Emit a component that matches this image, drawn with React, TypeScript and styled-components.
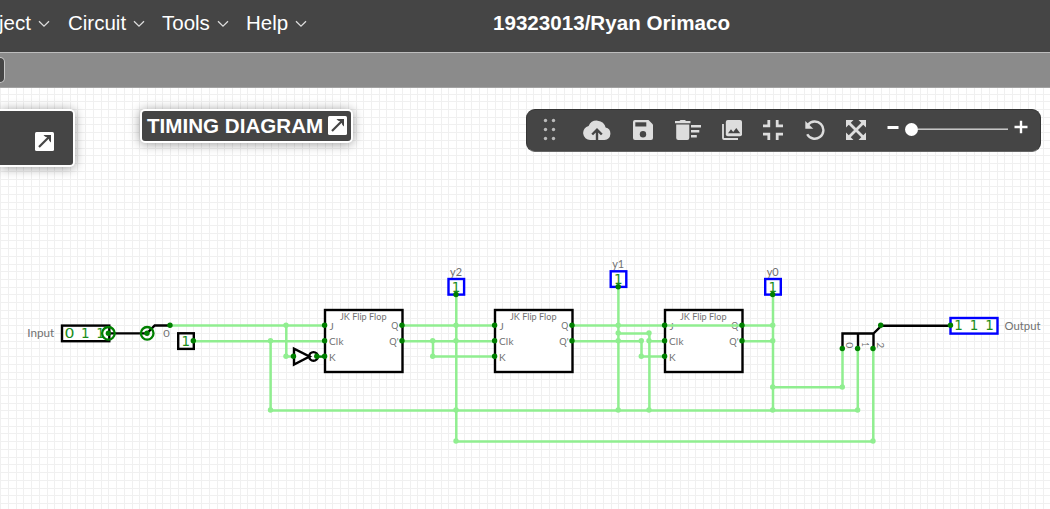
import React from "react";
import styled, { createGlobalStyle } from "styled-components";

const Global = createGlobalStyle`
  body { margin: 0; overflow: hidden; font-family: "Liberation Sans", Arial, sans-serif; }
  * { box-sizing: border-box; }
`;

const Page = styled.div`
  display: flex;
  flex-direction: column;
  width: 1050px;
  height: 509px;
  overflow: hidden;
  background: #fff;
`;

const Navbar = styled.header`
  display: flex;
  flex: none;
  align-items: flex-start;
  height: 53px;
  padding-top: 11px;
  background: #454545;
  border-bottom: 1px solid #bdbdbd;
  color: #fff;
`;

const Menu = styled.nav`
  display: flex;
  width: 493px;
  flex: none;
  margin-left: -1px;
`;

const MenuItem = styled.div<{ $width: number }>`
  display: flex;
  flex: none;
  align-items: center;
  width: ${(p) => p.$width}px;
  height: 24px;
  font-size: 20.5px;
  white-space: nowrap;
  svg { margin: 2px 0 0 7px; flex: none; }
`;

const Title = styled.h1`
  margin: 0 0 0 1px;
  font-size: 20.6px;
  line-height: 24px;
  white-space: nowrap;
`;

const TabBar = styled.div`
  display: flex;
  flex: none;
  align-items: flex-start;
  height: 35px;
  padding-top: 4px;
  background: #8b8b8b;
  border-bottom: 1px solid #a2a2a2;
`;

const Tab = styled.div`
  width: 5px;
  height: 26px;
  background: #454545;
  border: 1px solid #c8c8c8;
  border-left: 0;
  border-radius: 0 5px 5px 0;
`;

const Workspace = styled.main`
  position: relative;
  flex: 1;
`;

const Floating = styled.div`
  position: relative;
  display: flex;
  align-items: flex-start;
  padding-top: 21px;
`;

const Panel = styled.div`
  display: flex;
  align-items: center;
  color: #fff;
  background: #454545;
  border: 2px solid #fff;
  border-radius: 5px;
  box-shadow: 0 1px 11px rgba(0, 0, 0, 0.4);
`;

const ElementsPanel = styled(Panel)`
  width: 75px;
  height: 58px;
  padding: 7px 0 0 35px;
  border-left: 0;
  border-radius: 0 5px 5px 0;
`;

const TimingPanel = styled(Panel)`
  width: 213px;
  height: 34px;
  margin-left: 65px;
  padding: 0 0 0 5px;
  font-size: 20.6px;
  font-weight: bold;
  white-space: nowrap;
  svg { margin: 0 0 1px 5px; flex: none; }
`;

const Toolbar = styled.div`
  display: flex;
  align-items: center;
  width: 515px;
  height: 43px;
  margin-left: 173px;
  padding: 0 0 2px 14px;
  background: #454545;
  border: 1px solid #353535;
  border-bottom-color: #666;
  border-radius: 9px;
`;

const Tool = styled.div<{ $gap?: number }>`
  display: flex;
  flex: none;
  margin-left: ${(p) => p.$gap ?? 0}px;
`;

const Slider = styled.div`
  display: flex;
  align-items: center;
  width: 109px;
  height: 14px;
  margin-left: 6px;
`;

const Knob = styled.div`
  width: 13px;
  height: 13px;
  border-radius: 50%;
  background: #fff;
`;

const Track = styled.div`
  flex: 1;
  height: 2px;
  margin-right: 6px;
  margin-top: -2px;
  background: linear-gradient(#8d8d8d 50%, #c5c5c5 50%);
`;

const Canvas = styled.svg`
  position: absolute;
  left: 0;
  top: 0;
`;

const Caret = () => (
  <svg width="12" height="8" viewBox="0 0 12 8" fill="none" stroke="#ddd" strokeWidth="1.3">
    <path d="M1 1.2 6 6.2 11 1.2" />
  </svg>
);

const PopOut = () => (
  <svg width="19" height="19" viewBox="0 0 19 19">
    <rect width="19" height="19" rx="1.5" fill="#fff" />
    <path d="M14.2 4.8 4 15" fill="none" stroke="#454545" strokeWidth="2.2" />
    <path d="M8.5 3H16V10.5L14.2 8.8V4.8H10.2Z" fill="#454545" />
    <path d="M10 3.5H15.5V9Z" fill="#454545" />
  </svg>
);

const LIGHT = "#ddd";

const Handle = () => (
  <svg width="16" height="24" viewBox="0 0 16 24" fill="#bbb">
    {[4.5, 12.5].map((x) => [2.5, 11.5, 20.5].map((y) => <circle key={`${x}-${y}`} cx={x} cy={y} r="1.7" />))}
  </svg>
);

const Cloud = () => (
  <svg width="28" height="20" viewBox="0 0 28 20">
    <path d="M22.6 7.6A9 9 0 0 0 5.6 6 7.1 7.1 0 0 0 7.2 20H21.5A6.3 6.3 0 0 0 22.6 7.6Z" fill={LIGHT} />
    <path d="M14 20V10.5M9.2 14.5 14 9.7 18.8 14.5" fill="none" stroke="#454545" strokeWidth="2.4" />
  </svg>
);

const Save = () => (
  <svg width="20" height="20" viewBox="0 0 20 20">
    <path d="M2 0H15.5L20 4.5V18A2 2 0 0 1 18 20H2A2 2 0 0 1 0 18V2A2 2 0 0 1 2 0Z" fill={LIGHT} />
    <path d="M2.3 2.3H13.3V6.5H2.3Z" fill="#454545" />
    <circle cx="10" cy="14.2" r="3.2" fill="#454545" />
  </svg>
);

const Sweep = () => (
  <svg width="26" height="20" viewBox="0 0 26 20" fill={LIGHT}>
    <path d="M0 1H4.5L5.5 0H10L11 1H15.5V3.3H0ZM1.2 4.5H14.3V18A2 2 0 0 1 12.3 20H3.2A2 2 0 0 1 1.2 18ZM16 5H26V7.4H16ZM16 10H24.3V12.4H16ZM16 15H21.8V17.4H16Z" />
  </svg>
);

const Photos = () => (
  <svg width="20" height="20" viewBox="0 0 20 20">
    <path d="M1 4V18A1 1 0 0 0 2 19H16" fill="none" stroke={LIGHT} strokeWidth="1.8" />
    <rect x="3.8" width="16.2" height="16.2" rx="2" fill={LIGHT} />
    <path d="M6 13.3 9 9.2 11.2 12 14.3 8 18.2 13.3Z" fill="#454545" />
  </svg>
);

const Shrink = () => (
  <svg width="20" height="20" viewBox="0 0 20 20" fill="none" stroke={LIGHT} strokeWidth="2.8">
    <path d="M5.8 0V5.8H0M14.2 0V5.8H20M0 14.2H5.8V20M20 14.2H14.2V20" />
  </svg>
);

const Undo = () => (
  <svg width="20" height="20" viewBox="0 0 20 20">
    <path d="M3 4.8A8.6 8.6 0 1 1 2.2 14.2" fill="none" stroke={LIGHT} strokeWidth="2.4" />
    <path d="M0.3 1V8.8H8.3Z" fill={LIGHT} />
  </svg>
);

const Expand = () => (
  <svg width="20" height="20" viewBox="0 0 20 20">
    <path d="M2 2 18 18M18 2 2 18" stroke={LIGHT} strokeWidth="2.8" />
    <path d="M0 0H7.5L0 7.5ZM20 0V7.5L12.5 0ZM0 20V12.5L7.5 20ZM20 20H12.5L20 12.5Z" fill={LIGHT} />
  </svg>
);

const Minus = () => (
  <svg width="12" height="4" viewBox="0 0 12 4"><path d="M0.5 2.5H11.5" stroke="#fff" strokeWidth="3" /></svg>
);
const Plus = () => (
  <svg width="14" height="14" viewBox="0 0 14 14"><path d="M0.5 7H13.5M7 0.7V13.3" stroke="#fff" strokeWidth="2.4" /></svg>
);

const ZoomSign = styled.div<{ $gap?: number }>`
  display: flex;
  flex: none;
  margin: 0 0 5px ${(p) => p.$gap ?? 0}px;
`;

const WIRE = "#90ee90";
const PORT = "#008000";

const STEP = 7.725;
const gridX = Array.from({ length: 138 }, (_, i) => Math.round(456 - 59 * STEP + i * STEP) + 0.5);
const gridY = Array.from({ length: 58 }, (_, i) => Math.round(325.3 - 31 * STEP + i * STEP) + 0.5);

const wires = [
  "M170 325.5H325", "M193 341.2H325", "M286.3 325.5V356.5H294", "M270.6 341.2V410.4H857.8V348.5",
  "M402 325.5H495", "M402 341.2H495", "M433 341.2V356.5H495",
  "M456.3 295V441.4H873.3V348.5", "M572 325.5H742", "M572 341.2H641.5V356.5H665",
  "M618.4 287.5V410.4", "M618.4 333.5H649.4V410.4M649.4 341.2H665",
  "M742 325.5H773M742 341.2H773M773 295V410.4M773 387.3H842.5V348.5",
];
const joints: [number, number][] = [
  [286, 325.3], [286, 356.3], [270.5, 340.7], [270.5, 410], [432.7, 340.7], [432.7, 356.3],
  [456, 325.3], [456, 340.7], [456, 410], [456, 441], [618.2, 325.3], [618.2, 333], [618.2, 340.7],
  [618.2, 410], [641.3, 340.7], [641.3, 356.3], [649, 333], [649, 340.7], [649, 410],
  [772.7, 325.3], [772.7, 340.7], [772.7, 387], [772.7, 410], [842.3, 387], [857.6, 410], [873, 441],
];
const ports: [number, number][] = [
  [170, 325.2], [193.3, 340.8], [293.5, 356.3], [316.8, 356.3], [456, 294.5], [618.2, 286.8], [772.7, 294.5],
  [842.3, 348.5], [857.6, 348.5], [873, 348.5], [880.7, 325.2], [950.5, 325.2],
];

const Label = styled.text`
  font-family: Lato, "Open Sans", sans-serif;
  fill: #707070;
`;
const Digit = styled.text`
  font-family: "DejaVu Sans", sans-serif;
  font-size: 13.5px;
  fill: #1c8e1c;
  text-anchor: middle;
`;

const FlipFlopBody = ({ x }: { x: number }) => (
  <g>
    <rect x={x} y={310} width={77.5} height={62} fill="#fff" stroke="#000" strokeWidth="2.4" />
    <Label x={x + 15} y={320.3} fontSize="9.5" textLength="46.5" lengthAdjust="spacingAndGlyphs">JK Flip Flop</Label>
    <Label x={x + 4.5} y={329.5} fontSize="10">J</Label>
    <Label x={x + 4} y={345} fontSize="10" textLength="14.5">Clk</Label>
    <Label x={x + 4} y={360.5} fontSize="10">K</Label>
    <Label x={x + 66.3} y={329} fontSize="9.5" textLength="7" lengthAdjust="spacingAndGlyphs">Q</Label>
    <Label x={x + 64.3} y={344.8} fontSize="9.5" textLength="9.3" lengthAdjust="spacingAndGlyphs">Q'</Label>
  </g>
);

const FlipFlopPorts = ({ x }: { x: number }) => (
  <g fill={PORT}>
    {[325.2, 340.8, 356.3].map((y) => <circle key={y} cx={x - 0.4} cy={y} r="2.7" />)}
    {[325.2, 340.8].map((y) => <circle key={y} cx={x + 77} cy={y} r="2.7" />)}
  </g>
);

const Probe = ({ x, y, name }: { x: number; y: number; name: string }) => (
  <g>
    <rect x={x - 7.5} y={y - 8} width="15.6" height="15.6" fill="#fff" stroke="#00f" strokeWidth="2.4" />
    <Digit x={x} y={y + 4.6}>1</Digit>
    <Label x={x - 6} y={y - 11} fontSize="11.5" textLength="12" lengthAdjust="spacingAndGlyphs">{name}</Label>
  </g>
);

const Circuit = () => (
  <Canvas width="1050" height="421" viewBox="0 88 1050 421">
    <g stroke="#f0f0f0" strokeWidth="1">
      {gridX.map((x) => <path key={x} d={`M${x} 88V509`} />)}
      {gridY.map((y) => <path key={y} d={`M0 ${y}H1050`} />)}
    </g>
    {[325, 495, 665].map((x) => <FlipFlopBody key={x} x={x} />)}
    <Probe x={456} y={287} name="y2" />
    <Probe x={618.2} y={279.3} name="y1" />
    <Probe x={772.7} y={287} name="y0" />
    <Label x="27.3" y="337.3" fontSize="11.5" textLength="27" lengthAdjust="spacingAndGlyphs">Input</Label>
    <rect x="62" y="325.6" width="47.3" height="15.6" fill="#fff" stroke="#000" strokeWidth="2.4" />
    <Digit x="69.5" y="338" textLength="10" lengthAdjust="spacingAndGlyphs">0</Digit>
    <Digit x="85.2" y="338">1</Digit>
    <Digit x="100.5" y="338">1</Digit>
    <rect x="178.2" y="333.3" width="15.6" height="15.6" fill="#fff" stroke="#000" strokeWidth="2.4" />
    <Digit x="185.7" y="346">1</Digit>
    <Label x="163.2" y="336.8" fontSize="9.5" textLength="6.5" lengthAdjust="spacingAndGlyphs">0</Label>
    <g fill="none" stroke={WIRE} strokeWidth="2.5" strokeLinejoin="round">
      {wires.map((d) => <path key={d} d={d} />)}
    </g>
    <g fill={WIRE}>{joints.map(([x, y]) => <circle key={`${x}-${y}`} cx={x} cy={y} r="2.7" />)}</g>
    <g fill="none" stroke="#000" strokeWidth="2.4">
      <path d="M108.5 333.4H147L154.7 325.5H170" />
      <path d="M842.5 348V333.5H873.5V348M858 333.5V348M873.5 333.5 881.5 325.7H950" />
      <path d="M294 348.8V364.6L309.5 356.5Z" fill="#fff" />
      <circle cx="313.5" cy="356.4" r="4.3" />
    </g>
    <path d="M317 356.6H325" stroke={PORT} strokeWidth="2.4" />
    <g stroke={PORT} strokeWidth="2.3" fill="none">
      <circle cx="108.4" cy="333.3" r="6.3" />
      <circle cx="147.2" cy="333.3" r="6.3" />
    </g>
    <g fill={PORT}><circle cx="108.4" cy="333.2" r="2.7" /><circle cx="147" cy="333.2" r="2.7" /></g>
    <rect x="950.5" y="318" width="47" height="15.6" fill="#fff" stroke="#00f" strokeWidth="2.4" />
    <Digit x="958.5" y="330.3">1</Digit>
    <Digit x="974" y="330.3">1</Digit>
    <Digit x="989.5" y="330.3">1</Digit>
    <Label x="1004.5" y="329.7" fontSize="11.5" textLength="36" lengthAdjust="spacingAndGlyphs">Output</Label>
    {["0", "1", "2"].map((n, i) => (
      <Label key={n} transform={`translate(${846.3 + i * 15.5} 342.2) rotate(90)`} fontSize="9.5" textLength={n === "1" ? 4.5 : 6} lengthAdjust="spacingAndGlyphs">{n}</Label>
    ))}
    {[325, 495, 665].map((x) => <FlipFlopPorts key={x} x={x} />)}
    <g fill={PORT}>{ports.map(([x, y]) => <circle key={`${x}-${y}`} cx={x} cy={y} r="2.7" />)}</g>
  </Canvas>
);

export default function App() {
  return (
    <Page>
      <Global />
      <Navbar>
        <Menu>
          <MenuItem $width={69}>ject<Caret /></MenuItem>
          <MenuItem $width={94}>Circuit<Caret /></MenuItem>
          <MenuItem $width={84}>Tools<Caret /></MenuItem>
          <MenuItem $width={80}>Help<Caret /></MenuItem>
        </Menu>
        <Title>19323013/Ryan Orimaco</Title>
      </Navbar>
      <TabBar><Tab /></TabBar>
      <Workspace>
        <Circuit />
        <Floating>
          <ElementsPanel><PopOut /></ElementsPanel>
          <TimingPanel>TIMING DIAGRAM<PopOut /></TimingPanel>
          <Toolbar>
            <Tool><Handle /></Tool>
            <Tool $gap={26}><Cloud /></Tool>
            <Tool $gap={22}><Save /></Tool>
            <Tool $gap={22}><Sweep /></Tool>
            <Tool $gap={21}><Photos /></Tool>
            <Tool $gap={21}><Shrink /></Tool>
            <Tool $gap={22}><Undo /></Tool>
            <Tool $gap={21}><Expand /></Tool>
            <ZoomSign $gap={21}><Minus /></ZoomSign>
            <Slider><Knob /><Track /></Slider>
            <ZoomSign><Plus /></ZoomSign>
          </Toolbar>
        </Floating>
      </Workspace>
    </Page>
  );
}
